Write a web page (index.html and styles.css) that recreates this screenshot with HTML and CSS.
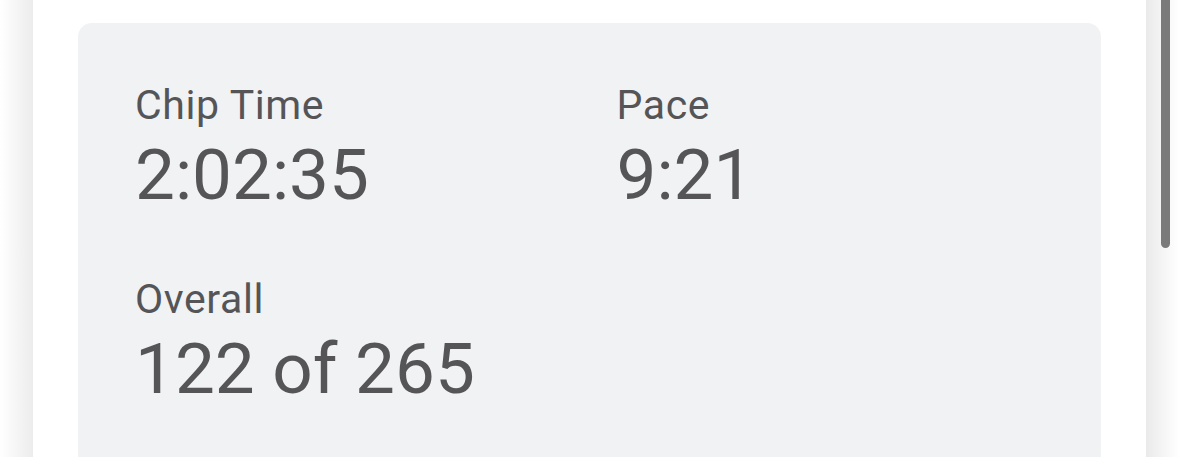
FILE: index.html
```html
<!DOCTYPE html>
<html lang="en">
<head>
<meta charset="utf-8">
<title>Result</title>
<link rel="stylesheet" href="styles.css">
</head>
<body>
<div class="page">
  <div class="card">
    <div class="panel">
      <div class="stats">
        <div class="stat">
          <div class="label">Chip Time</div>
          <div class="value">2:02:35</div>
        </div>
        <div class="stat">
          <div class="label">Pace</div>
          <div class="value">9:21</div>
        </div>
        <div class="stat">
          <div class="label">Overall</div>
          <div class="value">122 of 265</div>
        </div>
      </div>
    </div>
  </div>
</div>
<div class="scrollbar"></div>
</body>
</html>
```
FILE: styles.css
```css
html, body {
  margin: 0;
  padding: 0;
  height: 100%;
  overflow: hidden;
  background: #ffffff;
}

body {
  font-family: Roboto, "Noto Sans", "Liberation Sans", sans-serif;
  color: #555557;
}

.page {
  height: 457px;
  padding: 0 33px;
  box-sizing: border-box;
  background: linear-gradient(to right, #ffffff 0px, #ececec 33px, #ffffff 33px, #ffffff 1146px, #eaeaea 1146px, #ffffff 1179px);
}

.card {
  height: 100%;
  background: #ffffff;
  padding: 23px 45px 0;
  box-sizing: border-box;
}

.panel {
  background: #f1f2f4;
  border-radius: 14px 14px 0 0;
  height: 100%;
  padding: 57px 57px 0;
  box-sizing: border-box;
}

.stats {
  display: grid;
  grid-template-columns: 1fr 1fr;
  column-gap: 54px;
  row-gap: 55px;
}

.label {
  font-size: 41px;
  line-height: 50px;
  letter-spacing: 0.6px;
}

.value {
  font-size: 71px;
  line-height: 89px;
}

.scrollbar {
  position: fixed;
  top: -10px;
  left: 1161px;
  width: 9px;
  height: 258px;
  border-radius: 5px;
  background: #7a7a7a;
}
```
